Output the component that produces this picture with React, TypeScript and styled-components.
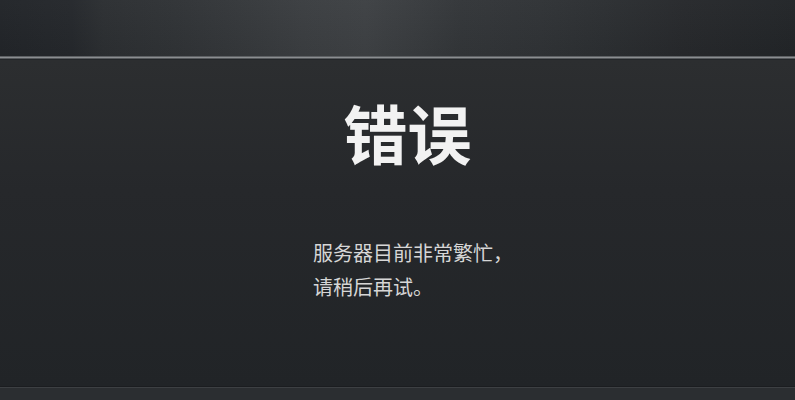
import React from "react";
import styled, { createGlobalStyle } from "styled-components";

const Global = createGlobalStyle`
  html, body { margin: 0; padding: 0; background: #222528; }
  body { font-family: "Noto Sans CJK SC", "Noto Sans", sans-serif; }
`;

const Page = styled.div`
  width: 795px;
  height: 400px;
  display: flex;
  flex-direction: column;
  overflow: hidden;
`;

const TopBar = styled.div`
  height: 56px;
  flex: none;
  background:
    linear-gradient(180deg, rgba(255,255,255,0.02) 0%, rgba(0,0,0,0.04) 100%),
    linear-gradient(90deg,
      #222529 0%,
      #25282c 9%,
      #2c2f32 13%,
      #303336 22%,
      #35383b 30%,
      #3b3e41 38%,
      #3e4144 46%,
      #393c3f 52%,
      #333639 58%,
      #303336 68%,
      #2c2f32 76%,
      #27292c 86%,
      #222528 100%);
  border-bottom: 1px solid #5e6164;
  box-shadow: 0 1px 0 #8b8e91, 0 2px 0 #55585b;
`;

const Main = styled.main`
  flex: 1;
  margin-top: 3px;
  background: linear-gradient(180deg, #2c2e30 0%, #26282b 40%, #212427 100%);
  display: flex;
  flex-direction: column;
  align-items: center;
  padding-top: 39px;
  box-sizing: border-box;
`;

const Title = styled.h1`
  margin: 0 0 0 20px;
  font-size: 64px;
  line-height: 64px;
  font-weight: 700;
  color: #f2f2f2;
  letter-spacing: 0;
`;

const Message = styled.p`
  margin: 73px 0 0 0;
  align-self: flex-start;
  padding-left: 313px;
  font-size: 20px;
  line-height: 34px;
  color: #d6d6d6;
`;

const Footer = styled.div`
  height: 13px;
  flex: none;
  background: #2b2e31;
  border-top: 1px solid #1b1d20;
  box-shadow: inset 0 1px 0 #3d4043;
`;

export default function App() {
  return (
    <Page>
      <Global />
      <TopBar />
      <Main>
        <Title>错误</Title>
        <Message>
          服务器目前非常繁忙，
          <br />
          请稍后再试。
        </Message>
      </Main>
      <Footer />
    </Page>
  );
}
